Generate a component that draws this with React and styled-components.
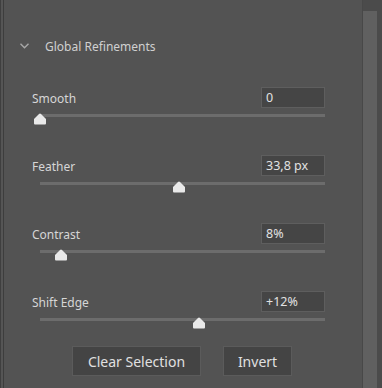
import React from "react";
import styled, { createGlobalStyle } from "styled-components";

const Global = createGlobalStyle`
  html, body { margin: 0; padding: 0; background: #535353; }
  body { width: 382px; height: 388px; overflow: hidden; font-family: "Noto Sans", "Open Sans", sans-serif; }
`;

const Frame = styled.div`
  display: flex;
  width: 382px;
  height: 388px;
  background: #535353;
`;

const LeftEdge = styled.div`
  width: 4px;
  flex: none;
  background: #4c4c4c;
  border-right: 1px solid #3d3d3d;
  box-sizing: border-box;
  box-shadow: inset -2px 0 0 #555, inset -3px 0 0 #3f3f3f;
`;

const Panel = styled.div`
  flex: 1;
  display: flex;
  flex-direction: column;
  padding: 36px 37px 0 16px;
  box-sizing: border-box;
`;

const ScrollCol = styled.div`
  width: 20px;
  flex: none;
  display: flex;
  border-left: 1px solid #484848;
  background: #4b4b4b;
  box-sizing: border-box;
`;

const ScrollTrack = styled.div`
  width: 14px;
  margin-top: 11px;
  background: #606060;
`;

const Heading = styled.div`
  display: flex;
  align-items: center;
  height: 20px;
  color: #d0d0d0;
  font-size: 12px;
  gap: 16px;
`;

const Groups = styled.div`
  display: flex;
  flex-direction: column;
  gap: 38px;
  margin-top: 31px;
  padding-left: 12px;
`;

const Group = styled.div`
  display: flex;
  flex-direction: column;
`;

const Row = styled.div`
  display: flex;
  justify-content: space-between;
  align-items: center;
  height: 21px;
`;

const Label = styled.span`
  color: #d6d6d6;
  font-size: 12px;
  padding-top: 2px;
`;

const ValueBox = styled.div`
  width: 64px;
  height: 21px;
  box-sizing: border-box;
  background: #454545;
  border: 1px solid #5e5e5e;
  color: #e2e2e2;
  font-size: 12.5px;
  line-height: 19px;
  padding-left: 4px;
`;

const Track = styled.div`
  position: relative;
  height: 3px;
  margin: 6px 0 0 8px;
  background: #6c6c6c;
`;

const Thumb = styled.svg`
  position: absolute;
  top: -1px;
  width: 13px;
  height: 12px;
  transform: translateX(-50%);
`;

const Buttons = styled.div`
  display: flex;
  justify-content: center;
  gap: 22px;
  margin-top: 25px;
  padding-left: 19px;
`;

const Button = styled.button`
  height: 30px;
  width: ${(p) => p.$w}px;
  box-sizing: border-box;
  background: #444444;
  border: 1px solid #5b5b5b;
  color: #e0e0e0;
  font-family: "Noto Sans", "Open Sans", sans-serif;
  font-size: 14px;
  padding: 0;
`;

const sliders = [
  { label: "Smooth", value: "0", pct: 0 },
  { label: "Feather", value: "33,8 px", pct: 48.8 },
  { label: "Contrast", value: "8%", pct: 7.4 },
  { label: "Shift Edge", value: "+12%", pct: 55.8 },
];

export default function App() {
  return (
    <>
      <Global />
      <Frame>
        <LeftEdge />
        <Panel>
          <Heading>
            <svg width="9" height="6" viewBox="0 0 9 6">
              <path d="M0.5 0.8 L4.5 4.8 L8.5 0.8" fill="none" stroke="#a8a8a8" strokeWidth="1.4" />
            </svg>
            <span>Global Refinements</span>
          </Heading>
          <Groups>
            {sliders.map((s) => (
              <Group key={s.label}>
                <Row>
                  <Label>{s.label}</Label>
                  <ValueBox>{s.value}</ValueBox>
                </Row>
                <Track>
                  <Thumb viewBox="0 0 13 12" style={{ left: `${s.pct}%` }}>
                    <path d="M6.5 0.5 Q7 0.5 7.5 1 L12.5 6 L12.5 10.5 Q12.5 11.5 11.5 11.5 L1.5 11.5 Q0.5 11.5 0.5 10.5 L0.5 6 L5.5 1 Q6 0.5 6.5 0.5 Z" fill="#e9e9e9" />
                  </Thumb>
                </Track>
              </Group>
            ))}
          </Groups>
          <Buttons>
            <Button $w={129}>Clear Selection</Button>
            <Button $w={69}>Invert</Button>
          </Buttons>
        </Panel>
        <ScrollCol>
          <ScrollTrack />
        </ScrollCol>
      </Frame>
    </>
  );
}
